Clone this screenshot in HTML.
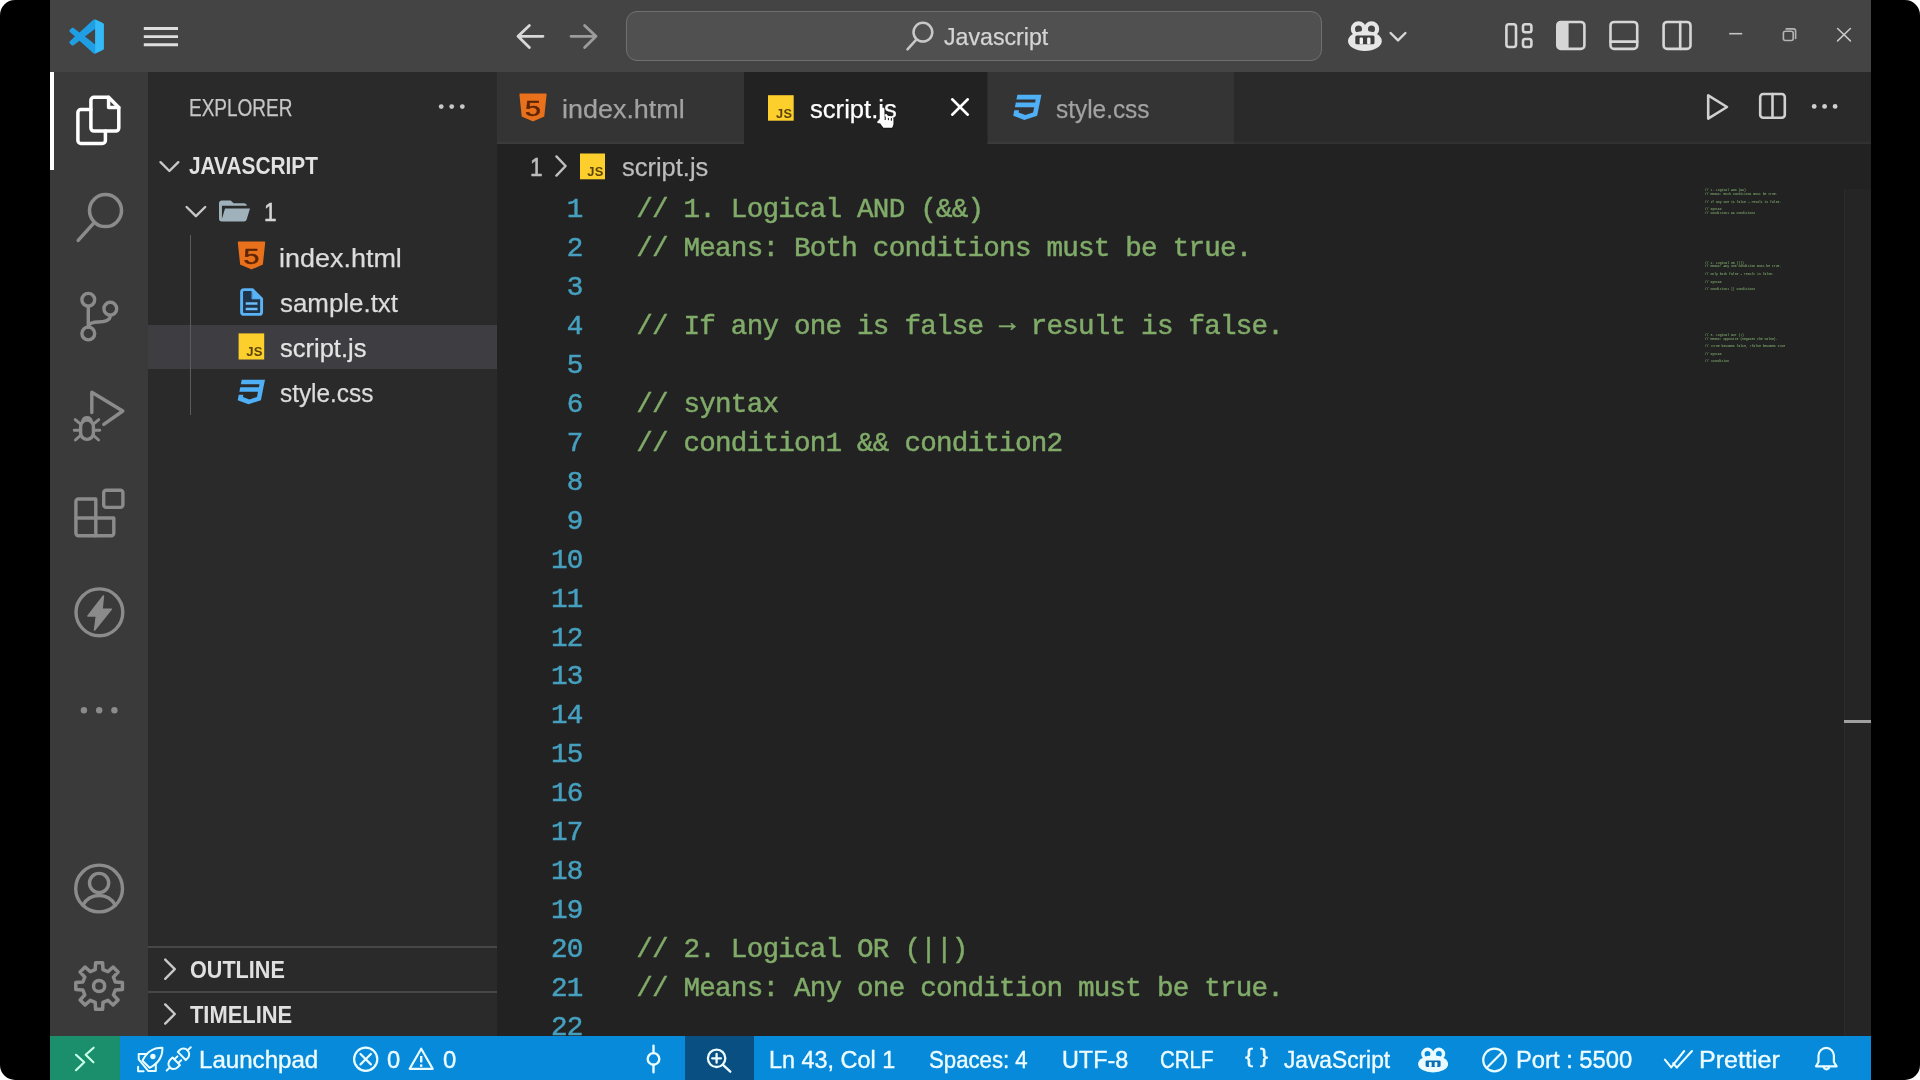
<!DOCTYPE html>
<html lang="en">
<head>
<meta charset="utf-8">
<title>script.js - Javascript - Visual Studio Code</title>
<style>
*{box-sizing:border-box;margin:0;padding:0}
html,body{width:1920px;height:1080px;overflow:hidden;background:#fff}
body{font-family:"Liberation Sans",sans-serif;color:#ccc;position:relative}
#frame{position:absolute;left:0;top:0;width:1920px;height:1080px;background:#000;border-radius:15px;overflow:hidden;will-change:transform}
#frame div,#frame svg{position:absolute}
#soft{left:0;top:0;width:1920px;height:1080px;filter:blur(0.55px)}
svg{overflow:visible}
.t{position:absolute;white-space:pre;line-height:1;transform-origin:0 0;display:block;-webkit-text-stroke:0.25px currentColor}
.fs{font-family:"Liberation Sans",sans-serif}
.fm{font-family:"Liberation Mono",monospace}
#title{left:50px;top:0;width:1821px;height:72px;background:#444}
#search{left:625.5px;top:11px;width:696px;height:50px;border:1.9px solid #707070;border-radius:11px;background:#505050}
#act{left:50px;top:72px;width:98.4px;height:964.5px;background:#3a3a3a}
#act .ind{left:0;top:0;width:4px;height:97.5px;background:#fff}
#side{left:148.4px;top:72px;width:348.7px;height:964.5px;background:#2a2a2a}
#sel{left:148.4px;top:324.8px;width:348.7px;height:44.6px;background:#3e3e42}
#guide{left:189.6px;top:234.5px;width:1.6px;height:180.5px;background:#5b5b5b}
.sep{left:148.4px;width:348.7px;height:2px;background:#474747}
#tabs{left:497.1px;top:72px;width:1374px;height:71.7px;background:#2a2a2a;box-shadow:inset 0 -2.2px 0 rgba(255,255,255,0.035)}
.tab{top:72px;height:71.7px;background:#343434;box-shadow:inset 0 -2.2px 0 rgba(255,255,255,0.035)}
.tab.active{background:#222;box-shadow:none}
#ed{left:497.1px;top:143.7px;width:1374px;height:893px;background:#222}
#status{left:50px;top:1036px;width:1821px;height:45px;background:#068ad9}
#remote{left:50px;top:1036px;width:69.6px;height:45px;background:#1b8f6b}
#zoomb{left:685px;top:1036px;width:68.8px;height:45px;background:#0a4f82}
.ln{-webkit-text-stroke:0.5px currentColor;position:absolute;font-family:"Liberation Mono",monospace;white-space:pre;line-height:1;color:#46a0bf;text-align:right}
.cl{-webkit-text-stroke:0.5px currentColor;position:absolute;font-family:"Liberation Mono",monospace;white-space:pre;line-height:1;color:#80ab69}
.mm{position:absolute;font-family:"Liberation Mono",monospace;white-space:pre;line-height:1;color:#769b66;font-size:3.125px;left:1704.8px;-webkit-text-stroke:0.1px #769b66}
#vscroll{left:1843.5px;top:188.8px;width:27.4px;height:847.4px;background:#252525;border-left:1.5px solid #2b2b2b}
#cursormark{left:1843.5px;top:720.1px;width:27.4px;height:3.2px;background:#a0a0a0}

</style>
</head>
<body>
<div id="frame">
<div id="soft">
<div id="title"></div>
<div id="search"></div>
<div id="act"><div class="ind"></div></div>
<div id="side"></div>
<div id="sel"></div>
<div id="guide"></div>
<div class="sep" style="top:946.4px"></div>
<div class="sep" style="top:991.2px"></div>
<div id="tabs"></div>
<div class="tab" style="left:497.1px;width:246.6px"></div>
<div class="tab active" style="left:743.7px;width:243.8px"></div>
<div class="tab" style="left:987.5px;width:246px"></div>
<div id="ed"></div>
<div id="vscroll"></div>
<div id="cursormark"></div>
<div id="status"></div>
<div id="remote"></div>
<div id="zoomb"></div>
<!-- title bar icons: one full-page svg in page coordinates -->
<svg style="left:0;top:0" width="1920" height="72" viewBox="0 0 1920 72" fill="none" stroke-linecap="round" stroke-linejoin="round">
<!-- vscode logo -->
<g transform="translate(69.4,19.4) scale(0.344)">
<path fill="#1f9ee3" fill-rule="evenodd" d="M70.9 99.3C72.5 99.9 74.3 99.9 75.9 99.1L96.5 89.2C98.6 88.2 100 86 100 83.6V16.4C100 14 98.6 11.8 96.5 10.8L75.9 0.9C73.8 -0.1 71.3 0.1 69.5 1.4C69.3 1.6 69 1.8 68.8 2.1L29.4 38L12.2 25C10.6 23.8 8.4 23.9 6.9 25.2L1.4 30.3C-0.5 31.9 -0.5 34.8 1.4 36.4L16.2 50L1.4 63.6C-0.5 65.2 -0.5 68.1 1.4 69.7L6.9 74.8C8.4 76.1 10.6 76.2 12.2 75L29.4 62L68.8 97.9C69.4 98.5 70.1 99 70.9 99.3ZM75 27.3L45.1 50L75 72.7V27.3Z"/>
<path fill="#34baf6" d="M75 0.6L96.5 10.8C98.6 11.8 100 14 100 16.4V83.6C100 86 98.6 88.2 96.5 89.2L75 99.4Z"/>
</g>
<!-- hamburger -->
<g stroke="#dedede" stroke-width="2.9" stroke-linecap="butt">
<path d="M143.8 28.5H178M143.8 36.6H178M143.8 44.7H178"/>
</g>
<!-- back / forward -->
<path stroke="#d8d8d8" stroke-width="2.8" d="M543 36.3H518M529.4 25.4L518 36.3L529.4 47.6"/>
<path stroke="#9c9c9c" stroke-width="2.8" d="M571 36.3H596M584.6 25.4L596 36.3L584.6 47.6"/>
<!-- search icon -->
<g stroke="#c8c8c8" stroke-width="2.5">
<circle cx="922.9" cy="32.2" r="9.4"/>
<path d="M916.3 39.6L907.5 49.4"/>
</g>
<!-- copilot -->
<g>
<ellipse cx="1364.9" cy="41" rx="16.9" ry="10" fill="#e6e6e6"/>
<circle cx="1358.5" cy="28.9" r="5.6" stroke="#e6e6e6" stroke-width="4.2"/>
<circle cx="1371.5" cy="28.9" r="5.6" stroke="#e6e6e6" stroke-width="4.2"/>
<rect x="1355.3" y="35.6" width="19.2" height="8.6" rx="1.5" fill="#3d3d3d"/>
<rect x="1359.6" y="37.6" width="3.4" height="6.6" rx="1.2" fill="#f0f0f0"/>
<rect x="1367.1" y="37.6" width="3.4" height="6.6" rx="1.2" fill="#f0f0f0"/>
</g>
<path stroke="#d8d8d8" stroke-width="2.4" d="M1390.6 33L1398 40.4L1405.4 33"/>
<!-- layout icons -->
<g stroke="#d6d6d6" stroke-width="2.6">
<rect x="1506.4" y="24.2" width="9.6" height="22.8" rx="2.5"/>
<rect x="1523" y="24.3" width="8.4" height="8" rx="2.2"/>
<rect x="1523" y="39" width="8.4" height="8" rx="2.2"/>
<rect x="1557.3" y="22" width="27.1" height="26.9" rx="3.5"/>
<rect x="1610.5" y="22" width="26.7" height="26.9" rx="3.5"/>
<path d="M1610.5 41.6H1637.2"/>
<rect x="1663.6" y="22" width="26.9" height="26.9" rx="3.5"/>
<path d="M1680.2 22V48.9"/>
</g>
<path fill="#d6d6d6" d="M1560.8 22H1568.6V48.9H1560.8a3.5 3.5 0 0 1-3.5-3.5V25.5a3.5 3.5 0 0 1 3.5-3.5Z"/>
<!-- window controls -->
<path stroke="#c4c4c4" stroke-width="1.6" stroke-linecap="butt" d="M1729.2 33.7H1742.2"/>
<g stroke="#b4b4b4" stroke-width="1.6">
<rect x="1783.4" y="31.3" width="9.8" height="9.2" rx="2"/>
<path d="M1786.2 28.9H1793.4a2.2 2.2 0 0 1 2.2 2.2V38.4"/>
</g>
<path stroke="#cacaca" stroke-width="1.5" d="M1837.6 28.5L1850.4 40.9M1850.4 28.5L1837.6 40.9"/>
</svg>

<!-- activity bar icons -->
<svg style="left:0;top:0" width="160" height="1080" viewBox="0 0 160 1080" fill="none" stroke-linecap="round" stroke-linejoin="round">
<!-- explorer (active) -->
<g stroke="#ffffff" stroke-width="3.5">
<path d="M93.9 97.3H108.6L118.8 107.5V128.1a3 3 0 0 1-3 3H93.9a3 3 0 0 1-3-3V100.3a3 3 0 0 1 3-3Z"/>
<path d="M108.6 97.3V107.5H118.8"/>
<path d="M90.9 109.6H80.9a3 3 0 0 0-3 3V140.4a3 3 0 0 0 3 3H102.4a3 3 0 0 0 3-3V131.1"/>
</g>
<!-- search -->
<g stroke="#8b8b8b" stroke-width="3.5">
<circle cx="105.5" cy="210.6" r="16"/>
<path d="M94.4 222.4L78.2 240.4"/>
</g>
<!-- source control -->
<g stroke="#8b8b8b" stroke-width="3.4">
<circle cx="88.3" cy="299.8" r="6.4"/>
<circle cx="88.3" cy="333.5" r="6.4"/>
<circle cx="110.3" cy="308.7" r="6.4"/>
<path d="M88.3 306.3V327"/>
<path d="M110.3 315.2C110.3 323 99 321.5 94.5 322.2C91 322.8 88.3 324.5 88.3 327"/>
</g>
<!-- run and debug -->
<g stroke="#8b8b8b" stroke-width="3.4">
<path d="M91.8 412.5V392.2L122.8 411L103.8 424.4"/>
<path d="M80.6 426.5a6.4 6.4 0 0 1 12.8 0V433a6.4 6.4 0 0 1-12.8 0Z"/>
<path d="M82.6 421a4.5 4.5 0 0 1 8.8 0" stroke-width="2.9"/>
<path d="M80.6 424.2L75.2 419.6M93.4 424.2L98.8 419.6M80.6 430.2H74.2M93.4 430.2H99.8M80.6 435.4L75.4 440M93.4 435.4L98.6 440" stroke-width="2.9"/>
</g>
<!-- extensions -->
<g stroke="#8b8b8b" stroke-width="3.4">
<path d="M78.4 499H95.8V518H113.8V533.3a2.5 2.5 0 0 1-2.5 2.5H78.4a2.5 2.5 0 0 1-2.5-2.5V501.5a2.5 2.5 0 0 1 2.5-2.5Z"/>
<path d="M75.9 518H95.8V535.8"/>
<rect x="103.7" y="490.2" width="19.2" height="17.2" rx="2.5"/>
</g>
<!-- thunder client -->
<circle cx="99.4" cy="612.3" r="23.4" stroke="#8b8b8b" stroke-width="3.4"/>
<path d="M103.4 596L88 616H96.4L94.6 630L111.2 609.2H102Z" fill="#8b8b8b" stroke="#8b8b8b" stroke-width="1.6"/>
<!-- more -->
<g fill="#8b8b8b"><circle cx="83.9" cy="710.3" r="3.2"/><circle cx="99.2" cy="710.3" r="3.2"/><circle cx="114.4" cy="710.3" r="3.2"/></g>
<!-- accounts -->
<g stroke="#8b8b8b" stroke-width="3.4">
<circle cx="99.1" cy="888.5" r="23.4"/>
<circle cx="99.1" cy="883" r="9.6"/>
<path d="M82.8 905.2A18.5 18.5 0 0 1 115.4 905.2"/>
</g>
<!-- manage -->
<g stroke="#8b8b8b" stroke-width="3.5">
<path d="M95.2 969.7 L95.6 962.7 L102.6 962.7 L103.0 969.7 L107.9 971.7 L113.1 967.0 L118.1 972.0 L113.4 977.2 L115.4 982.1 L122.4 982.5 L122.4 989.5 L115.4 989.9 L113.4 994.8 L118.1 1000.0 L113.1 1005.0 L107.9 1000.3 L103.0 1002.3 L102.6 1009.3 L95.6 1009.3 L95.2 1002.3 L90.3 1000.3 L85.1 1005.0 L80.1 1000.0 L84.8 994.8 L82.8 989.9 L75.8 989.5 L75.8 982.5 L82.8 982.1 L84.8 977.2 L80.1 972.0 L85.1 967.0 L90.3 971.7Z"/>
<circle cx="99.1" cy="986" r="5.6"/>
</g>
</svg>

<svg style="left:0;top:0" width="500" height="1040" viewBox="0 0 500 1040" fill="none" stroke-linecap="round" stroke-linejoin="round">
<!-- sidebar icons -->
<g fill="#c8c8c8"><circle cx="441.2" cy="106.6" r="2.4"/><circle cx="451.7" cy="106.6" r="2.4"/><circle cx="462.3" cy="106.6" r="2.4"/></g>
<path stroke="#c8c8c8" stroke-width="2.4" d="M160.5 162.2L169.4 171L178.3 162.2"/>
<path stroke="#c8c8c8" stroke-width="2.4" d="M186.6 207L195.9 216.2L205.2 207"/>
<path stroke="#c8c8c8" stroke-width="2.4" d="M165.2 959.6L174.8 969.2L165.2 978.8"/>
<path stroke="#c8c8c8" stroke-width="2.4" d="M165.2 1004.4L174.8 1014L165.2 1023.6"/>
<path transform="translate(216.08 195.40) scale(1.4616 1.3000)" fill="#9fb2bb" d="M19 20H4a2 2 0 0 1-2-2V6c0-1.11.89-2 2-2h6l2 2h7a2 2 0 0 1 2 2H4v10l2.14-8h17.07l-2.28 8.500c-.23.870-1.010 1.500-1.930 1.500z"/>
<path d="M238.6 242.4 L264.4 242.4 L262.1 264.1 L251.5 268.6 L240.9 264.1Z" fill="#e9711c" stroke="#e9711c" stroke-width="1.6" stroke-linejoin="round"/><text x="251.5" y="264.5" font-family="Liberation Sans, sans-serif" font-weight="400" font-size="22.0" text-anchor="middle" fill="#5c2406" stroke="#5c2406" stroke-width="0.5" transform="translate(251.5 0) scale(1.3 1) translate(-251.5 0)">5</text>
<path d="M244.1 289.6H252.4L261.6 298.8V311.9a2.5 2.5 0 0 1 -2.5 2.5H244.1a2.5 2.5 0 0 1 -2.5 -2.5V292.1a2.5 2.5 0 0 1 2.5 -2.5Z" fill="#1f3349" stroke="#5ab3f6" stroke-width="2.9" stroke-linejoin="round"/><path d="M252.4 289.6L261.6 298.8H252.4Z" fill="#5ab3f6" stroke="#5ab3f6" stroke-width="1" stroke-linejoin="round"/><path d="M245.7 303.6H257.5M245.7 309.0H257.5" stroke="#6bbcf8" stroke-width="2.5" stroke-linecap="butt"/>
<rect x="238.6" y="333.4" width="25.6" height="26.1" fill="#fdcf2d"/><text x="262.8" y="356.2" font-family="Liberation Sans, sans-serif" font-weight="700" font-size="13.1" text-anchor="end" fill="#5a4306" letter-spacing="0.3">JS</text>
<path transform="translate(234.87 375.73) scale(1.3732 1.3581)" fill="#4fb0f6" d="M5 3l-.65 3.34h13.59L17.5 8.5H3.92l-.66 3.33h13.59l-.76 3.81-5.48 1.81-4.75-1.81.33-1.64H2.85l-.79 4 7.85 3 9.05-3 1.2-6.03.24-1.21L21.94 3H5z"/>

</svg>

<svg style="left:0;top:0" width="1880" height="200" viewBox="0 0 1880 200" fill="none" stroke-linecap="round" stroke-linejoin="round">
<!-- editor icons -->
<path d="M520.2 94.4 L545.8 94.4 L543.5 116.1 L533.0 120.6 L522.5 116.1Z" fill="#e9711c" stroke="#e9711c" stroke-width="1.6" stroke-linejoin="round"/><text x="533.0" y="116.5" font-family="Liberation Sans, sans-serif" font-weight="400" font-size="22.0" text-anchor="middle" fill="#5c2406" stroke="#5c2406" stroke-width="0.5" transform="translate(533.0 0) scale(1.3 1) translate(-533.0 0)">5</text>
<rect x="768.0" y="95.2" width="25.7" height="25.5" fill="#fdcf2d"/><text x="792.3" y="117.5" font-family="Liberation Sans, sans-serif" font-weight="700" font-size="12.8" text-anchor="end" fill="#5a4306" letter-spacing="0.3">JS</text>
<path transform="translate(1010.28 90.61) scale(1.4185 1.3969)" fill="#4fb0f6" d="M5 3l-.65 3.34h13.59L17.5 8.5H3.92l-.66 3.33h13.59l-.76 3.81-5.48 1.81-4.75-1.81.33-1.64H2.85l-.79 4 7.85 3 9.05-3 1.2-6.03.24-1.21L21.94 3H5z"/>
<path stroke="#ffffff" stroke-width="2.6" d="M952.2 99.3L967.8 114.700M967.8 99.3L952.2 114.700"/>
<path stroke="#c0c0c0" stroke-width="2.4" d="M556.4 156.4L565.6 166L556.4 175.600"/>
<rect x="580.0" y="153.5" width="25.0" height="25.8" fill="#fdcf2d"/><text x="603.6" y="176.1" font-family="Liberation Sans, sans-serif" font-weight="700" font-size="12.9" text-anchor="end" fill="#5a4306" letter-spacing="0.3">JS</text>
<g stroke="#d0d0d0" stroke-width="2.6">
<path d="M1708.2 95.4V118.600L1727 107Z"/>
<rect x="1760.2" y="94" width="24.6" height="23.8" rx="3"/>
<path d="M1772.5 94V117.800"/>
</g>
<g fill="#d0d0d0"><circle cx="1814.2" cy="106.4" r="2.4"/><circle cx="1824.6" cy="106.4" r="2.4"/><circle cx="1835.1" cy="106.4" r="2.4"/></g>
<!-- mouse pointer (hand) -->
<g transform="translate(875.1 105.2) scale(1.1)">
<path d="M7.2 1.6c1.1 0 1.9.8 1.9 1.900v5.200l.9-.2c.9-.2 1.700.3 2 1.100l.7-.1c1-.2 1.900.4 2.100 1.300l.5-.1c1.100-.1 2 .7 2 1.800v4.200c0 1.200-.3 2.300-.9 3.300l-.6 1.100H7.200l-4.500-6.100c-.6-.8-.4-1.900.4-2.400.7-.5 1.700-.4 2.300.3V3.500c0-1.100.8-1.900 1.800-1.900Z" fill="#fff" stroke="#1a1a1a" stroke-width="1.2"/>
<path d="M9.200 9.400v3.600M12.100 10.200v2.900M14.800 11.300v2.300" stroke="#1a1a1a" stroke-width="1"/>
</g>

</svg>

<svg style="left:0;top:0" width="1880" height="1080" viewBox="0 0 1880 1080" fill="none" stroke-linecap="round" stroke-linejoin="round">
<!-- status bar icons -->
<g stroke="#c9ffe9" stroke-width="2.2">
<path d="M76 1054.8L84.2 1062.3L76 1070.2"/>
<path d="M93.6 1047.7L85.7 1054.8L93.4 1062.3"/>
</g>
<g stroke="#eafcff" stroke-width="2">
<path d="M162.4 1047.7C154 1047.5 147 1051 142.5 1060.7L149.6 1067.8C159 1063 162.7 1056 162.4 1047.7Z"/>
<path d="M147 1053.9H138.7V1059.4L148.4 1071.1H155.8V1063.4"/>
<path d="M138.1 1066.8V1071.2H143.6"/>
<circle cx="152.9" cy="1056.5" r="1.7" fill="#eafcff"/>
</g>
<g transform="translate(178.75 1058.9) rotate(-44.1)" stroke="#eafcff" stroke-width="2">
<path d="M-16.8 0H-12.2"/>
<path d="M-3.4 -5.3H-7a5.3 5.3 0 0 0 0 10.6H-3.4Z"/>
<path d="M-3.4 -2.7H.8M-3.4 2.7H.8"/>
<path d="M4.2 -5.7V5.7H6.6a5.7 5.7 0 0 0 0-11.4Z"/>
<path d="M12.3 0H16.8"/>
</g>
<g stroke="#eafcff" stroke-width="2.2">
<circle cx="365.7" cy="1059.2" r="11.6"/>
<path d="M360.5 1054L370.9 1064.4M370.9 1054L360.5 1064.4"/>
<path d="M421.2 1048.7L432.7 1068.8H409.7Z"/>
<path d="M421.2 1056V1062.4" stroke-width="2.4" stroke-linecap="butt"/>
<path d="M421.2 1064.4V1066.8" stroke-width="2.4" stroke-linecap="butt"/>
</g>
<g stroke="#eafcff" stroke-width="2.4">
<circle cx="653.5" cy="1058.9" r="5.8"/>
<path d="M653.5 1045.6V1053M653.5 1064.8V1072.2"/>
</g>
<g stroke="#eafcff" stroke-width="2.3">
<circle cx="716.6" cy="1058.3" r="8.7"/>
<path d="M712.2 1058.3H721M716.6 1053.9V1062.7"/>
<path d="M723 1064.8L730.3 1071.700"/>
</g>
<!-- copilot small -->
<g>
<ellipse cx="1433.1" cy="1064" rx="15" ry="8.4" fill="#eafcff"/>
<circle cx="1427.5" cy="1053.9" r="4.6" stroke="#eafcff" stroke-width="3.4"/>
<circle cx="1438.9" cy="1053.9" r="4.6" stroke="#eafcff" stroke-width="3.4"/>
<rect x="1425.6" y="1060.4" width="15" height="6.6" rx="1.4" fill="#0b6fb8"/>
<rect x="1428.9" y="1062" width="2.8" height="5" rx="1" fill="#eafcff"/>
<rect x="1434.6" y="1062" width="2.8" height="5" rx="1" fill="#eafcff"/>
</g>
<!-- port: circle slash -->
<g stroke="#eafcff" stroke-width="2.2">
<circle cx="1494.5" cy="1060" r="11.3"/>
<path d="M1486.6 1068L1502.5 1052"/>
</g>
<!-- check-all -->
<g stroke="#eafcff" stroke-width="2.1">
<path d="M1664.9 1059.6L1671.2 1067.4L1684.2 1051"/>
<path d="M1673.2 1063.2L1676.8 1067.6L1692 1051"/>
</g>
<!-- bell -->
<g stroke="#eafcff" stroke-width="2.2">
<path d="M1816 1066.4H1836.6L1833.9 1062V1055.6a7.7 7.7 0 0 0-15.4 0V1062Z"/>
<path d="M1823.7 1066.6a2.700 2.700 0 0 0 5.400 0"/>
</g>

</svg>

<span class="t fs" style="left:944.40px;top:24.64px;font-size:24.8px;color:#d4d4d4;transform:scaleX(0.9344);">Javascript</span>
<span class="t fs" style="left:189.18px;top:97.27px;font-size:23px;color:#c6c6c6;transform:scaleX(0.8249);">EXPLORER</span>
<span class="t fs" style="left:189.30px;top:154.35px;font-size:24.2px;color:#e2e2e2;font-weight:700;transform:scaleX(0.8615);-webkit-text-stroke:0;">JAVASCRIPT</span>
<span class="t fs" style="left:263.70px;top:199.32px;font-size:26.6px;color:#d4d4d4;transform:scaleX(0.8500);-webkit-text-stroke:0.6px currentColor;">1</span>
<span class="t fs" style="left:279.39px;top:244.92px;font-size:26.6px;color:#dcdcdc;transform:scaleX(1.0134);">index.html</span>
<span class="t fs" style="left:280.40px;top:290.02px;font-size:26.6px;color:#dcdcdc;transform:scaleX(0.9737);">sample.txt</span>
<span class="t fs" style="left:280.40px;top:335.32px;font-size:26.6px;color:#e4e4e4;transform:scaleX(0.9584);">script.js</span>
<span class="t fs" style="left:280.40px;top:380.12px;font-size:26.6px;color:#dcdcdc;transform:scaleX(0.9158);">style.css</span>
<span class="t fs" style="left:189.60px;top:957.85px;font-size:24.2px;color:#e0e0e0;font-weight:700;transform:scaleX(0.8932);-webkit-text-stroke:0;">OUTLINE</span>
<span class="t fs" style="left:189.60px;top:1002.75px;font-size:24.2px;color:#e0e0e0;font-weight:700;transform:scaleX(0.9048);-webkit-text-stroke:0;">TIMELINE</span>
<span class="t fs" style="left:561.99px;top:95.52px;font-size:26.6px;color:#a2a2a2;transform:scaleX(1.0126);">index.html</span>
<span class="t fs" style="left:809.80px;top:95.52px;font-size:26.6px;color:#ffffff;transform:scaleX(0.9629);">script.js</span>
<span class="t fs" style="left:1055.60px;top:95.52px;font-size:26.6px;color:#a2a2a2;transform:scaleX(0.9168);">style.css</span>
<span class="t fs" style="left:529.70px;top:153.92px;font-size:26.6px;color:#bdbdbd;transform:scaleX(0.8500);-webkit-text-stroke:0.6px currentColor;">1</span>
<span class="t fs" style="left:622.30px;top:153.92px;font-size:26.6px;color:#bdbdbd;transform:scaleX(0.9573);">script.js</span>
<span class="t fs" style="left:199.06px;top:1047.84px;font-size:24.8px;color:#eefcff;transform:scaleX(0.9714);-webkit-text-stroke:0.4px currentColor;">Launchpad</span>
<span class="t fs" style="left:386.80px;top:1047.84px;font-size:24.8px;color:#eefcff;transform:scaleX(0.9538);-webkit-text-stroke:0.4px currentColor;">0</span>
<span class="t fs" style="left:442.50px;top:1047.84px;font-size:24.8px;color:#eefcff;transform:scaleX(0.9615);-webkit-text-stroke:0.4px currentColor;">0</span>
<span class="t fs" style="left:769.11px;top:1047.84px;font-size:24.8px;color:#eefcff;transform:scaleX(0.9433);-webkit-text-stroke:0.4px currentColor;">Ln 43, Col 1</span>
<span class="t fs" style="left:929.10px;top:1047.84px;font-size:24.8px;color:#eefcff;transform:scaleX(0.8951);-webkit-text-stroke:0.4px currentColor;">Spaces: 4</span>
<span class="t fs" style="left:1062.06px;top:1047.84px;font-size:24.8px;color:#eefcff;transform:scaleX(0.9422);-webkit-text-stroke:0.4px currentColor;">UTF-8</span>
<span class="t fs" style="left:1159.67px;top:1047.84px;font-size:24.8px;color:#eefcff;transform:scaleX(0.8254);-webkit-text-stroke:0.4px currentColor;">CRLF</span>
<span class="t fs" style="left:1245.00px;top:1045.46px;font-size:21px;color:#eefcff;transform:scaleX(1.1588);-webkit-text-stroke:0.4px currentColor;">{ }</span>
<span class="t fs" style="left:1283.80px;top:1047.84px;font-size:24.8px;color:#eefcff;transform:scaleX(0.9165);-webkit-text-stroke:0.4px currentColor;">JavaScript</span>
<span class="t fs" style="left:1515.58px;top:1047.84px;font-size:24.8px;color:#eefcff;transform:scaleX(0.9577);-webkit-text-stroke:0.4px currentColor;">Port : 5500</span>
<span class="t fs" style="left:1698.98px;top:1047.84px;font-size:24.8px;color:#eefcff;transform:scaleX(1.0107);-webkit-text-stroke:0.4px currentColor;">Prettier</span>
<span class="ln" style="left:566.82px;top:196.09px;font-size:27.6px;letter-spacing:-0.780px">1</span>
<span class="cl" style="left:636.2px;top:196.09px;font-size:27.6px;letter-spacing:-0.780px">// 1. Logical AND (&amp;&amp;)</span>
<span class="ln" style="left:566.82px;top:235.04px;font-size:27.6px;letter-spacing:-0.780px">2</span>
<span class="cl" style="left:636.2px;top:235.04px;font-size:27.6px;letter-spacing:-0.780px">// Means: Both conditions must be true.</span>
<span class="ln" style="left:566.82px;top:273.99px;font-size:27.6px;letter-spacing:-0.780px">3</span>
<span class="ln" style="left:566.82px;top:312.94px;font-size:27.6px;letter-spacing:-0.780px">4</span>
<span class="cl" style="left:636.2px;top:312.94px;font-size:27.6px;letter-spacing:-0.780px">// If any one is false <span style="position:relative;top:-3.4px">→</span> result is false.</span>
<span class="ln" style="left:566.82px;top:351.89px;font-size:27.6px;letter-spacing:-0.780px">5</span>
<span class="ln" style="left:566.82px;top:390.84px;font-size:27.6px;letter-spacing:-0.780px">6</span>
<span class="cl" style="left:636.2px;top:390.84px;font-size:27.6px;letter-spacing:-0.780px">// syntax</span>
<span class="ln" style="left:566.82px;top:429.79px;font-size:27.6px;letter-spacing:-0.780px">7</span>
<span class="cl" style="left:636.2px;top:429.79px;font-size:27.6px;letter-spacing:-0.780px">// condition1 &amp;&amp; condition2</span>
<span class="ln" style="left:566.82px;top:468.74px;font-size:27.6px;letter-spacing:-0.780px">8</span>
<span class="ln" style="left:566.82px;top:507.69px;font-size:27.6px;letter-spacing:-0.780px">9</span>
<span class="ln" style="left:551.04px;top:546.64px;font-size:27.6px;letter-spacing:-0.780px">10</span>
<span class="ln" style="left:551.04px;top:585.59px;font-size:27.6px;letter-spacing:-0.780px">11</span>
<span class="ln" style="left:551.04px;top:624.54px;font-size:27.6px;letter-spacing:-0.780px">12</span>
<span class="ln" style="left:551.04px;top:663.49px;font-size:27.6px;letter-spacing:-0.780px">13</span>
<span class="ln" style="left:551.04px;top:702.44px;font-size:27.6px;letter-spacing:-0.780px">14</span>
<span class="ln" style="left:551.04px;top:741.39px;font-size:27.6px;letter-spacing:-0.780px">15</span>
<span class="ln" style="left:551.04px;top:780.34px;font-size:27.6px;letter-spacing:-0.780px">16</span>
<span class="ln" style="left:551.04px;top:819.29px;font-size:27.6px;letter-spacing:-0.780px">17</span>
<span class="ln" style="left:551.04px;top:858.24px;font-size:27.6px;letter-spacing:-0.780px">18</span>
<span class="ln" style="left:551.04px;top:897.19px;font-size:27.6px;letter-spacing:-0.780px">19</span>
<span class="ln" style="left:551.04px;top:936.14px;font-size:27.6px;letter-spacing:-0.780px">20</span>
<span class="cl" style="left:636.2px;top:936.14px;font-size:27.6px;letter-spacing:-0.780px">// 2. Logical OR (||)</span>
<span class="ln" style="left:551.04px;top:975.09px;font-size:27.6px;letter-spacing:-0.780px">21</span>
<span class="cl" style="left:636.2px;top:975.09px;font-size:27.6px;letter-spacing:-0.780px">// Means: Any one condition must be true.</span>
<span class="ln" style="left:551.04px;top:1014.04px;font-size:27.6px;letter-spacing:-0.780px">22</span>
<span class="mm" style="top:189.40px">// 1. Logical AND (&amp;&amp;)</span>
<span class="mm" style="top:193.20px">// Means: Both conditions must be true.</span>
<span class="mm" style="top:200.80px">// If any one is false → result is false.</span>
<span class="mm" style="top:208.40px">// syntax</span>
<span class="mm" style="top:212.20px">// condition1 &amp;&amp; condition2</span>
<span class="mm" style="top:261.60px">// 2. Logical OR (||)</span>
<span class="mm" style="top:265.40px">// Means: Any one condition must be true.</span>
<span class="mm" style="top:273.00px">// Only both false → result is false.</span>
<span class="mm" style="top:280.60px">// syntax</span>
<span class="mm" style="top:288.20px">// condition1 || condition2</span>
<span class="mm" style="top:333.80px">// 3. Logical NOT (!)</span>
<span class="mm" style="top:337.60px">// Means: Opposite (negates the value).</span>
<span class="mm" style="top:345.20px">// !true becomes false, !false becomes true</span>
<span class="mm" style="top:352.80px">// syntax</span>
<span class="mm" style="top:360.40px">// !condition</span>
</div>
</div>

</body>
</html>
